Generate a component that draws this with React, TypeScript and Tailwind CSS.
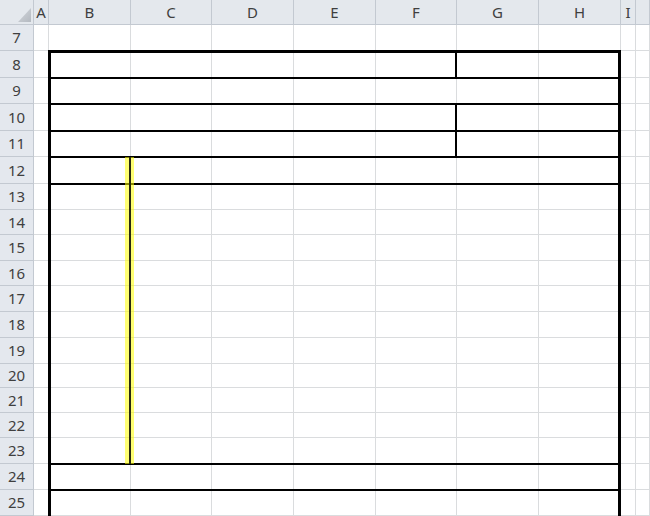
import React from "react";

const cols = ["A", "B", "C", "D", "E", "F", "G", "H", "I", ""];
const rows = [7, 8, 9, 10, 11, 12, 13, 14, 15, 16, 17, 18, 19, 20, 21, 22, 23, 24, 25];

const gridTemplate =
  "grid grid-cols-[34px_15px_82px_81px_82px_82px_81px_82px_82px_15px_1fr] grid-rows-[25px_26px_27px_26px_27px_26px_27px_26px_25px_26px_25px_26px_26px_26px_24px_25px_25px_26px_26px_1fr]";

function Corner() {
  return (
    <div className="bg-[#e4e8ed] border-r border-b border-[#c3c9d1] flex items-end justify-end pr-[2px] pb-[2px]">
      <svg width="13" height="14" viewBox="0 0 13 14">
        <defs>
          <linearGradient id="tri" x1="0" y1="0" x2="1" y2="1">
            <stop offset="0" stopColor="#d3d7dc" />
            <stop offset="1" stopColor="#b4b9c0" />
          </linearGradient>
        </defs>
        <polygon points="13,0 13,14 0,14" fill="url(#tri)" />
      </svg>
    </div>
  );
}

export default function App() {
  return (
    <div
      className="h-[516px] w-[650px] overflow-hidden bg-white grid text-[#3f3f3f]"
      style={{ fontFamily: '"Noto Sans", "Open Sans", sans-serif' }}
    >
      {/* cells */}
      <div className={`${gridTemplate} col-start-1 row-start-1`}>
        <Corner />
        {cols.map((c, i) => (
          <div
            key={"h" + i}
            className="bg-[#e4e8ed] border-r border-b border-[#c3c9d1] flex items-center justify-center text-[15px] leading-none"
          >
            {c}
          </div>
        ))}
        {rows.map((r) => (
          <React.Fragment key={r}>
            <div className="bg-[#e4e8ee] border-r border-b border-[#c3c9d1] flex items-center justify-center text-[15px] leading-none">
              {r}
            </div>
            {cols.map((c, i) => (
              <div
                key={r + "-" + i}
                className="border-r border-b border-[#dadcde]"
              />
            ))}
          </React.Fragment>
        ))}
      </div>

      {/* borders drawn over the cells */}
      <div
        className={`${gridTemplate} col-start-1 row-start-1 pointer-events-none`}
      >
        <div className="col-start-3 col-end-10 row-start-3 row-end-21 -ml-px -mt-px border-l-[3px] border-r-[3px] border-t-[3px] border-black flex flex-col">
          <div className="h-[26px] border-b-2 border-black flex">
            <div className="w-[406px] border-r-2 border-black" />
          </div>
          <div className="h-[26px] border-b-2 border-black" />
          <div className="h-[27px] border-b-2 border-black flex">
            <div className="w-[406px] border-r-2 border-black" />
          </div>
          <div className="h-[26px] border-b-2 border-black flex">
            <div className="w-[406px] border-r-2 border-black" />
          </div>
          <div className="h-[27px] border-b-2 border-black" />
          <div className="h-[280px] border-b-2 border-black" />
          <div className="h-[26px] border-b-2 border-black" />
          <div className="flex-1" />
        </div>

        {/* highlighted column edge */}
        <div className="col-start-3 col-end-5 row-start-7 row-end-19 ml-[76px] w-[9px] bg-[#ffff00]/55 flex justify-center">
          <div className="w-[2px] bg-[#2a2a12]" />
        </div>
      </div>
    </div>
  );
}
